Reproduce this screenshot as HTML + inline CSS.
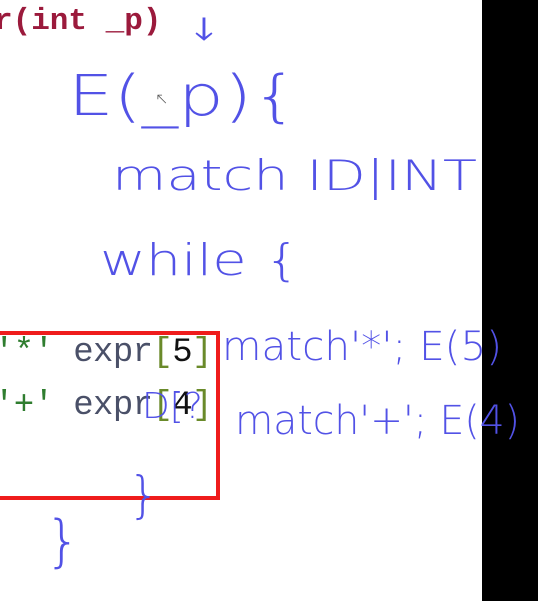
<!DOCTYPE html>
<html><head><meta charset="utf-8"><style>
html,body{margin:0;padding:0;width:538px;height:601px;overflow:hidden;background:#fff;position:relative}
.blk{position:absolute;left:482px;top:0;width:56px;height:601px;background:#000}
.box{position:absolute;left:-4px;top:331px;width:216px;height:161px;border:4px solid #ef1c1c;box-sizing:content-box}
.code{position:absolute;font-family:"Liberation Mono",monospace;font-size:34px;white-space:pre;letter-spacing:-0.6px}
.top{position:absolute;left:-6px;top:4px;font-family:"Liberation Mono",monospace;font-weight:bold;font-size:31px;color:#9b1a3c;white-space:pre}
.g{color:#2f7d2f}.e{color:#4a5068}.b{color:#6a8a2a}.n{color:#111}
svg{position:absolute;left:0;top:0}
</style></head><body>
<div class="top">r(int _p)</div>
<div class="box"></div>
<div class="code" style="left:-6px;top:334px"><span class="g">'*'</span> <span class="e">expr</span><span class="b">[</span><span class="n">5</span><span class="b">]</span></div>
<div class="code" style="left:-6px;top:387px"><span class="g">'+'</span> <span class="e">expr</span><span class="b">[</span><span class="n">4</span><span class="b">]</span></div>
<div class="blk"></div>
<svg width="538" height="601" font-family="DejaVu Sans, sans-serif" fill="#5252e6" font-weight="200">
<text x="195" y="40" font-size="34">ↆ</text>
<text x="68" y="115" font-size="56" textLength="230" lengthAdjust="spacingAndGlyphs">E(_p){</text>
<text x="112" y="190" font-size="42" textLength="365" lengthAdjust="spacingAndGlyphs">match ID|INT</text>
<text x="100" y="275" font-size="44" textLength="200" lengthAdjust="spacingAndGlyphs">while {</text>
<text x="222" y="360" font-size="40" textLength="280" lengthAdjust="spacingAndGlyphs">match'*'; E(5)</text>
<text x="235" y="434" font-size="40" textLength="285" lengthAdjust="spacingAndGlyphs">match'+'; E(4)</text>
<text x="142" y="418" font-size="36">D[?</text>
<text x="128" y="512" font-size="50">}</text>
<text x="45" y="560" font-size="56">}</text>
<text x="155" y="104" font-size="16" fill="#555">↖</text>
</svg>
</body></html>
